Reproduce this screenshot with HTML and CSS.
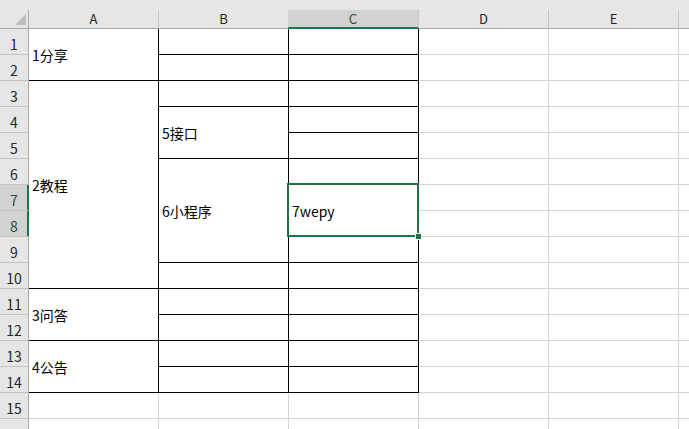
FILE: index.html
```html
<!DOCTYPE html>
<html lang="zh">
<head>
<meta charset="utf-8">
<title>Sheet</title>
<link rel="stylesheet" href="styles.css">
</head>
<body>
<div class="sheet">
  <div class="corner"><div class="inner"><svg class="tri" width="12" height="12" viewBox="0 0 12 12"><polygon points="0,11 11,11 11,0" fill="#bdbdbd"/></svg></div></div>
  <div class="colhead"><div class="inner">A</div></div>
  <div class="colhead"><div class="inner">B</div></div>
  <div class="colhead sel"><div class="inner">C</div></div>
  <div class="colhead"><div class="inner">D</div></div>
  <div class="colhead"><div class="inner">E</div></div>
  <div class="colhead last"><div class="inner"></div></div>

  <!-- row 1 -->
  <div class="rh">1</div>
  <div class="c b r2">1分享</div>
  <div class="c b"></div>
  <div class="c b"></div>
  <div class="c"></div><div class="c"></div><div class="c"></div>
  <!-- row 2 -->
  <div class="rh">2</div>
  <div class="c b"></div>
  <div class="c b"></div>
  <div class="c"></div><div class="c"></div><div class="c"></div>
  <!-- row 3 -->
  <div class="rh">3</div>
  <div class="c b r8">2教程</div>
  <div class="c b"></div>
  <div class="c b"></div>
  <div class="c"></div><div class="c"></div><div class="c"></div>
  <!-- row 4 -->
  <div class="rh">4</div>
  <div class="c b r2">5接口</div>
  <div class="c b"></div>
  <div class="c"></div><div class="c"></div><div class="c"></div>
  <!-- row 5 -->
  <div class="rh">5</div>
  <div class="c b"></div>
  <div class="c"></div><div class="c"></div><div class="c"></div>
  <!-- row 6 -->
  <div class="rh">6</div>
  <div class="c b r4">6小程序</div>
  <div class="c b"></div>
  <div class="c"></div><div class="c"></div><div class="c"></div>
  <!-- row 7 -->
  <div class="rh sel">7</div>
  <div class="c b r2 active">7wepy<span class="handle"></span></div>
  <div class="c"></div><div class="c"></div><div class="c"></div>
  <!-- row 8 -->
  <div class="rh sel">8</div>
  <div class="c"></div><div class="c"></div><div class="c"></div>
  <!-- row 9 -->
  <div class="rh">9</div>
  <div class="c b"></div>
  <div class="c"></div><div class="c"></div><div class="c"></div>
  <!-- row 10 -->
  <div class="rh">10</div>
  <div class="c b"></div>
  <div class="c b"></div>
  <div class="c"></div><div class="c"></div><div class="c"></div>
  <!-- row 11 -->
  <div class="rh">11</div>
  <div class="c b r2">3问答</div>
  <div class="c b"></div>
  <div class="c b"></div>
  <div class="c"></div><div class="c"></div><div class="c"></div>
  <!-- row 12 -->
  <div class="rh">12</div>
  <div class="c b"></div>
  <div class="c b"></div>
  <div class="c"></div><div class="c"></div><div class="c"></div>
  <!-- row 13 -->
  <div class="rh">13</div>
  <div class="c b r2">4公告</div>
  <div class="c b"></div>
  <div class="c b"></div>
  <div class="c"></div><div class="c"></div><div class="c"></div>
  <!-- row 14 -->
  <div class="rh">14</div>
  <div class="c b"></div>
  <div class="c b"></div>
  <div class="c"></div><div class="c"></div><div class="c"></div>
  <!-- row 15 -->
  <div class="rh">15</div>
  <div class="c"></div><div class="c"></div><div class="c"></div>
  <div class="c"></div><div class="c"></div><div class="c"></div>
  <!-- row 16 (partially visible, number below the fold) -->
  <div class="rh"></div>
  <div class="c"></div><div class="c"></div><div class="c"></div>
  <div class="c"></div><div class="c"></div><div class="c"></div>
</div>
</body>
</html>
```

FILE: styles.css
```css
html, body {
  margin: 0;
  padding: 0;
  background: #ffffff;
}

body {
  width: 689px;
  height: 429px;
  overflow: hidden;
  font-family: "Noto Sans CJK JP", "Noto Sans", sans-serif;
}

.sheet {
  display: grid;
  grid-template-columns: 29px repeat(5, 130px) 11px;
  grid-template-rows: 29px repeat(15, 26px) 26px;
  width: 689px;
  height: 429px;
  overflow: hidden;
}

.corner,
.colhead {
  background: #e6e6e6;
  border-bottom: 1px solid #a9a9a9;
  box-sizing: border-box;
  height: 29px;
}

.corner .inner,
.colhead .inner {
  margin-top: 10px;
  height: 18px;
  box-sizing: border-box;
  border-right: 1px solid #c6c6c6;
  display: flex;
  align-items: center;
  justify-content: center;
  font-size: 13px;
  line-height: 18px;
  color: #262626;
}

.corner .inner {
  border-right-color: #a9a9a9;
  justify-content: flex-end;
  align-items: flex-end;
  padding-right: 1px;
  padding-bottom: 2px;
}

.tri {
  display: block;
}

.colhead.last .inner {
  border-right: none;
}

.colhead.sel {
  border-bottom-color: #217346;
}

.colhead.sel .inner {
  background: #d2d2d2;
  box-shadow: inset 0 -1px 0 #217346;
  color: #1f4f3a;
  margin-left: -1px;
}

.rh {
  grid-column: 1;
  background: #e6e6e6;
  border-right: 1px solid #a9a9a9;
  border-bottom: 1px solid #c4c4c4;
  box-sizing: border-box;
  display: flex;
  align-items: flex-end;
  justify-content: center;
  font-size: 14px;
  line-height: 16px;
  padding-bottom: 2px;
  color: #262626;
}

.rh.sel {
  background: #d2d2d2;
  border-right-color: #217346;
  box-shadow: inset -1px 0 0 #217346;
  color: #1f4f3a;
}

.c {
  border-right: 1px solid #d4d4d4;
  border-bottom: 1px solid #d4d4d4;
  box-sizing: border-box;
  display: flex;
  align-items: center;
  padding-left: 3px;
  font-size: 14px;
  color: #000000;
  white-space: nowrap;
}

.c.b {
  border-right-color: #000000;
  border-bottom-color: #000000;
}

.r2 { grid-row: span 2; }
.r4 { grid-row: span 4; }
.r8 { grid-row: span 8; }

.active {
  position: relative;
}

.active::after {
  content: "";
  position: absolute;
  left: -2px;
  top: -2px;
  right: -1px;
  bottom: -1px;
  border: 2px solid #217346;
  pointer-events: none;
}

.handle {
  position: absolute;
  right: -3px;
  bottom: -3px;
  width: 5px;
  height: 5px;
  background: #217346;
  box-shadow: 0 0 0 1px #ffffff;
  z-index: 2;
}
```
